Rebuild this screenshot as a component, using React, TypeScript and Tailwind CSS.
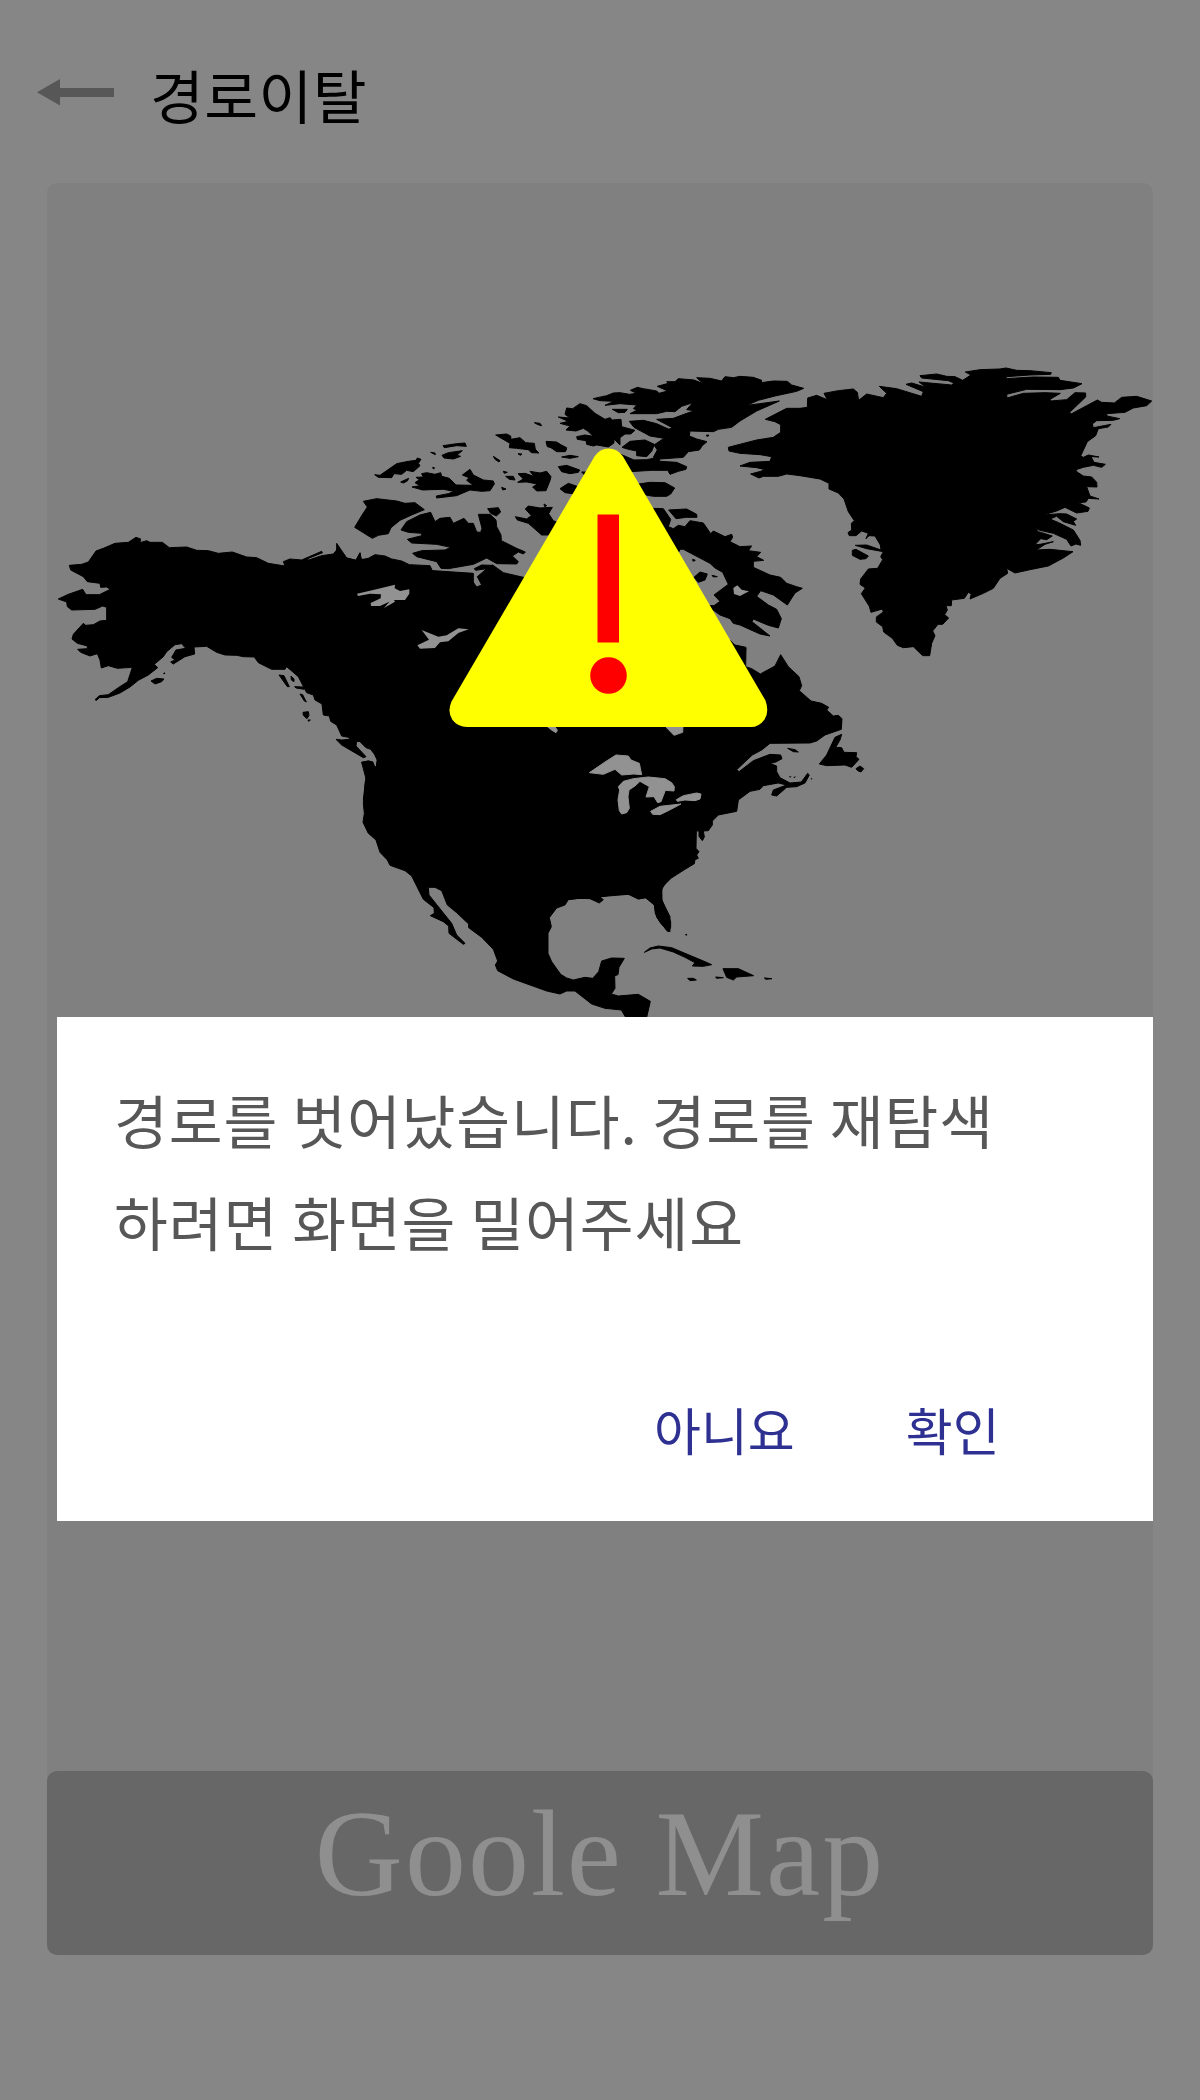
const LAND = "#000000";

function MapArt() {
  return (
    <svg viewBox="0 0 1106 834" className="block h-[834px] w-full" aria-hidden="true">
      <g transform="translate(-47 -183)" fill={LAND} stroke={LAND} strokeWidth="3" strokeLinejoin="round">
        {/* Alaska and western Canada */}
        <g transform="translate(40 500) scale(.33333)">
          <path d="M88 196L125 193L145 186L168 153L190 145L225 130L265 127L288 112L302 117L300 128L320 122L330 127L367 127L388 143L440 141L470 151L505 152L535 160L577 156L620 171L650 173L685 190L735 198L730 185L750 177L785 180L845 154L848 158L803 176L803 181L845 167L880 162L895 144L920 174L948 181L960 158L963 178L990 179L1000 200L1300 220L1300 900L970 900L979 840L965 787L985 783L998 786L1004 801L1009 800L1012 780L1005 765L992 748L978 743L960 725L950 724L948 738L978 770L970 773L905 735L888 718L905 720L930 718L925 712L905 708L890 675L872 664L868 648L850 645L846 612L825 600L820 585L800 578L775 530L740 500L735 508L712 508L695 508L655 488L643 471L610 470L590 466L555 465L530 457L500 439L462 441L464 462L435 470L400 492L392 486L405 480L395 472L408 450L437 445L425 431L405 434L380 455L370 470L343 493L353 503L325 525L295 541L270 561L240 579L205 592L178 593L170 601L165 599L178 587L205 584L235 563L263 545L277 502L232 505L205 497L184 504L180 480L172 461L150 468L122 457L113 448L142 446L142 438L112 430L96 417L100 403L130 370L137 376L160 374L180 363L200 361L200 322L188 318L165 328L95 330L82 320L80 306L55 297L85 283L128 268L138 284L178 284L211 268L200 261L182 262L180 250L142 245L130 230L92 210Z" />
          <path d="M333 543L350 535L372 537L365 545L345 552ZM372 519L375 519L374 521L371 521ZM717 525L732 527L748 560L742 560ZM753 528L762 537L762 545L754 540ZM764 560L790 561L793 568L768 564ZM780 582L788 584L799 606L793 603ZM789 637L805 635L807 646L801 656L790 646ZM804 660L811 660L806 664Z" />
        </g>
        {/* Arctic archipelago and central Canada */}
        <g transform="translate(340 380) scale(.33333)">
          <path d="M-10 490L20 534L48 541L60 520L64 539L85 535L105 524L135 528L155 537L185 543L208 554L270 557L276 570L257 573L258 587L290 591L360 587L395 600L410 621L425 615L412 590L440 566L458 555L490 578L550 592L900 592L900 1000L-10 1000Z" />
          <path d="M104 284L120 286L170 251L205 244L228 241L232 234L243 238L235 250L240 257L220 275L200 271L185 283L162 281L155 293L115 292ZM182 306L206 295L202 303L190 309ZM272 217L285 219L286 224ZM309 197L350 191L375 189L379 199L350 197L313 203ZM306 226L325 218L367 212L350 226L362 229L340 237L312 234ZM216 321L240 317L225 308L238 299L228 292L250 291L245 281L260 278L285 283L302 278L305 289L328 295L348 315L400 316L380 301L387 293L367 285L390 268L400 285L430 300L460 303L463 312L450 332L425 334L390 330L350 347L290 354L289 348L325 341L342 334L310 328L275 329L248 330Z" />
          <path d="M70 364L110 356L170 363L195 370L225 368L253 389L215 405L180 421L153 443L145 461L115 466L97 475L44 442L65 407L82 381Z" />
          <path d="M183 450L200 425L240 405L272 397L285 425L300 415L330 412L340 430L372 415L385 430L400 430L410 456L422 457L426 445L415 403L450 403L468 420L470 440L483 465L484 482L530 505L556 516L550 522L535 516L517 528L535 545L530 552L470 551L440 534L400 553L325 566L303 565L290 545L230 530L218 520L245 512L315 510L332 502L290 493L215 489L202 478L245 467L245 460L205 457ZM403 566L425 555L458 556L440 566L407 571ZM443 386L475 383L482 396L469 408L452 400ZM467 165L500 162L512 168L513 178L540 173L557 188L583 190L586 208L597 219L574 218L565 209L530 205L508 203L510 190ZM583 128L600 130L605 137L594 134ZM618 185L650 186L680 207L676 215L650 215L635 203L622 200ZM460 229L480 242L477 246L465 238ZM534 221L546 222L541 226ZM665 231L690 226L715 230L690 235ZM655 260L680 256L719 270L715 277L690 281L665 275ZM497 289L520 289L525 300L508 298ZM534 281L555 280L582 289L570 274L600 279L620 274L633 290L630 302L618 332L590 333L578 321L592 312L560 306L533 307L550 297ZM660 326L685 310L720 322L705 342L675 338ZM526 410L560 417L574 407L556 387L565 378L600 384L637 382L626 401L640 422L670 435L640 465L605 465L565 430L532 420ZM485 322L498 327L488 330ZM490 274L502 277L493 280ZM612 372L620 377L614 380ZM278 262L284 264L280 267ZM725 276L745 276L735 287Z" />
        </g>
        {/* Ellesmere, Baffin and the neighbouring islands */}
        <g transform="translate(540 350) scale(.33333)">
          <path d="M159 146L200 137L220 129L240 128L268 133L290 130L271 121L292 112L310 116L350 123L357 130L383 123L352 109L385 100L380 95L405 95L415 86L462 90L490 101L470 83L510 85L545 93L555 80L580 83L600 79L640 82L665 91L664 98L700 93L742 94L755 105L791 115L770 124L705 138L655 151L620 166L660 161L718 153L650 183L600 213L575 232L535 238L520 245L480 244L450 243L448 258L470 267L501 275L487 287L478 300L445 305L430 322L360 327L340 322L352 300L342 285L372 265L330 258L282 232L268 214L310 211L350 221L385 237L400 235L350 208L400 205L440 190L464 182L440 179L458 158L425 169L405 185L380 184L350 191L270 191L292 180L280 176L290 165L240 161L195 166L222 154L180 152Z" />
          <path d="M55 201L90 204L75 193L80 174L98 176L120 161L140 167L165 190L195 208L210 203L217 210L243 208L245 230L285 241L272 252L255 252L240 263L240 285L222 267L222 279L205 291L170 285L160 288L140 283L138 272L112 268L110 260L135 255L160 259L143 243L130 235L108 243L78 240L90 228L60 220L85 214ZM217 178L262 178L255 187L235 188ZM246 292L270 274L315 270L343 283L335 304L320 320L290 317L290 303L265 298ZM498 256L507 255L503 260ZM240 312L282 330L320 329L355 322L360 334L410 337L440 350L438 358L415 364L390 373L383 361L335 361L270 365L230 340ZM290 403L330 397L375 398L404 414L392 432L380 439L340 439L290 430ZM340 475L370 476L392 508L385 530L400 536L415 526L435 530L450 512L490 519L512 551L520 543L555 560L575 553L578 562L570 575L600 590L635 588L625 602L662 607L650 620L671 631L640 634L640 652L690 675L722 682L740 700L770 710L787 715L765 729L742 765L700 735L662 722L650 739L685 765L710 778L724 806L715 834L685 826L640 807L636 815L690 858L660 852L600 825L580 820L570 806L540 795L500 766L522 767L540 754L522 735L565 703L548 667L525 654L510 640L430 598L400 596Z" />
          <path d="M386 480L440 477L470 493L471 502L440 502L408 506ZM462 682L480 666L502 672L495 690L475 697ZM20 274L50 278L80 293L75 304L50 304L28 290ZM516 676L532 680L520 681ZM458 628L466 631L459 634ZM410 585L425 590L415 608ZM570 870L585 886L618 894L614 903L570 903Z" />
          <path fill="#929292" stroke="none" d="M580 714L592 706L605 719L627 724L600 738L582 732Z" />
        </g>
        {/* Greenland */}
        <g transform="translate(800 350) scale(.33333)">
          <path d="M-104 208L-40 175L0 175L22 172L23 144L50 136L82 149L72 130L115 122L160 117L172 127L176 151L200 132L250 143L260 130L238 109L290 116L365 139L370 125L318 103L335 99L378 112L357 96L455 105L462 99L445 92L365 84L360 77L410 72L440 79L465 80L488 91L513 75L496 66L540 59L600 57L618 54L650 61L690 62L754 68L752 73L690 75L620 80L617 86L700 81L775 82L780 91L846 101L820 114L780 119L680 118L620 133L621 144L670 130L735 128L781 130L750 148L752 153L800 149L825 128L857 129L857 141L808 188L815 191L892 150L905 157L943 159L965 142L1010 139L1055 153L1040 167L1000 174L975 187L920 191L921 198L959 206L940 211L890 212L877 222L880 233L933 223L925 231L895 236L887 257L862 275L842 318L850 322L865 315L897 321L873 320L882 337L916 343L905 352L880 346L850 352L828 359L830 365L850 378L875 381L890 397L891 411L860 410L870 438L897 447L865 445L858 456L835 458L868 474L864 484L830 489L795 472L770 483L730 495L780 491L800 492L830 507L820 514L827 526L790 515L770 499L750 507L776 518L820 540L840 571L842 586L828 582L813 588L800 568L760 550L720 541L705 535L715 545L757 558L740 569L722 566L705 584L720 583L760 575L735 583L709 600L750 598L819 605L790 624L745 648L690 659L645 669L620 655L623 670L600 685L580 715L550 730L510 747L514 732L505 727L493 745L455 750L454 767L438 767L442 780L434 794L446 804L428 823L414 823L398 843L405 857L395 880L389 917L368 917L340 890L310 893L292 886L277 865L251 846L248 830L229 816L229 801L250 786L247 777L213 787L208 769L184 731L196 714L180 703L182 687L205 657L233 655L248 629L242 620L250 605L200 596L166 586L200 585L243 600L241 585L225 558L207 557L198 566L205 550L185 543L168 557L148 557L144 548L155 540L154 520L163 512L145 485L132 447L115 429L87 417L87 400L60 387L0 377L-40 372L-65 379L-110 379L-123 384L-148 372L-118 364L-105 359L-130 353L-180 348L-150 337L-90 334L-85 320L-120 314L-180 310L-213 303L-215 292L-200 288L-130 270L-80 262L-58 247L-58 224L-75 215Z" />
          <path d="M157 601L168 598L205 618L198 626L180 628L157 616Z" />
        </g>
        {/* United States west coast and Mexico */}
        <g transform="translate(340 660) scale(.33333)">
          <path d="M65 307L85 303L98 306L104 321L109 320L112 300L105 285L105 150L990 150L990 658L966 682L965 720L990 770L990 815L981 812L950 772L943 735L915 712L895 717L870 703L830 702L780 711L790 719L778 729L750 716L715 715L685 719L675 735L650 744L628 773L634 800L624 820L624 880L635 905L662 943L680 954L700 960L735 952L758 955L776 935L785 903L815 894L853 895L837 922L834 944L824 947L825 985L814 1002L835 1008L895 1003L931 1024L920 1072L857 1072L844 1050L795 1045L755 1032L705 993L680 993L660 1002L620 993L570 975L520 957L473 932L466 915L473 903L460 868L425 832L386 803L386 792L350 758L322 735L305 692L285 682L265 682L267 705L335 790L350 825L375 850L370 853L327 820L326 798L310 785L271 767L283 760L282 743L250 718L215 648L195 632L150 616L142 600L120 577L108 540L85 520L69 487L73 460L70 430L75 370L80 345L77 325Z" />
        </g>
        {/* East coast, Newfoundland and the Caribbean */}
        <g transform="translate(560 640) scale(.33333)">
          <path d="M-50 100L510 0L515 13L558 22L557 80L575 86L601 102L645 78L662 44L685 80L717 110L725 137L718 152L753 183L785 190L806 202L800 210L820 228L835 226L846 236L844 268L795 285L770 303L750 309L630 310L605 330L577 345L530 389L537 395L580 362L630 343L662 345L666 356L648 366L630 370L650 378L650 395L660 413L690 429L724 426L743 400L748 405L735 429L710 440L680 442L650 468L635 465L640 450L680 435L655 429L610 437L600 448L570 454L535 480L530 514L475 525L457 543L457 555L445 572L430 573L433 591L427 602L417 589L417 573L409 573L408 625L417 635L410 645L415 655L405 659L403 671L375 688L320 723L304 750L306 780L332 845L332 862L325 876L300 847L286 820L283 794L260 773L235 777L205 763L0 780L-50 780Z" />
          <path d="M778 372L800 345L825 292L845 283L840 300L827 322L845 323L852 337L890 338L888 350L897 358L875 382L855 375L800 377ZM888 386L900 378L911 386L903 396L893 392ZM683 325L705 329L715 336L700 335ZM253 937L270 924L295 918L335 923L375 940L435 965L455 974L430 979L397 978L405 968L375 952L340 936L300 924L275 927ZM489 986L535 986L581 1007L530 1011L520 1020L500 1012ZM383 1015L400 1015L409 1020L390 1022ZM613 1014L636 1016L618 1018ZM467 1011L490 1013L470 1015Z" />
          <path stroke="none" d="M376 882L382 882L380 887L376 886ZM752 414L758 416L754 419ZM687 407L695 410L690 413ZM700 412L708 408L703 415Z" />
          <g fill="#929292" stroke="#929292">
            <path d="M88 398L135 366L168 345L205 348L213 360L238 370L245 404L222 402L185 405L165 388L130 403L105 400ZM175 440L190 424L220 416L265 411L315 416L335 428L343 440L342 453L316 451L303 485L293 488L282 470L258 471L268 440L240 424L225 438L207 450L204 470L208 505L200 518L185 522L178 512L174 480L179 450ZM272 514L300 499L363 492L325 512L300 524L278 523ZM349 479L370 467L410 459L423 462L420 477L405 482L375 480L352 484ZM312 255L369 255L368 277L342 286Z" />
            <path d="M-44 255L-18 255L-8 271L-12 278L-24 271Z" />
          </g>
        </g>
        {/* Northern lakes */}
        <path
          fill="#929292"
          stroke="none"
          transform="translate(340 380) scale(.33333)"
          d="M51 641L90 632L165 614L164 625L180 633L208 628L208 641L195 660L162 660L165 665L132 684L148 665L120 678L93 678L92 669L122 655L123 643L90 641L54 648ZM245 750L295 770L320 766L355 745L386 748L355 759L325 784L300 787L285 804L240 806L232 796L267 779Z"
        />
      </g>
    </svg>
  );
}

function WarningSign() {
  return (
    <svg viewBox="0 0 320 280" className="absolute left-[402px] top-[265px] h-[280px] w-[320px]" aria-label="경고">
      <path
        fill="#ffff00"
        d="M145.500 8.500Q151 0.500 159.500 0.500Q168.500 0.500 174 8.500L316.500 252.500Q320.500 264 315.500 271.500Q310 279 302 279H18Q9 279 3.500 272Q-2 264 2.500 253.500Z"
      />
      <rect x="148.500" y="66.500" width="21.500" height="128" fill="#ff0000" />
      <circle cx="159.500" cy="227.500" r="18.300" fill="#ff0000" />
    </svg>
  );
}

export default function App() {
  return (
    <div className="flex h-[2100px] w-[1200px] flex-col bg-[#868686] font-['Noto_Sans_CJK_KR',sans-serif]">
      <header className="flex h-[183px] items-start pl-[37px] pt-[52px]">
        <svg viewBox="0 0 77 27" className="mt-[27px] h-[27px] w-[77px]" fill="#575757" aria-label="뒤로">
          <path d="M0 13.300L23 0V9H77V18H23V26.500Z" />
        </svg>
        <h1 className="ml-[36px] text-[58.5px] leading-[84px] tracking-[0.4px] text-black">경로이탈</h1>
      </header>

      <main className="mx-[47px] flex h-[1772px] flex-col rounded-[10px] bg-[#808080]">
        <div className="relative">
          <MapArt />
          <WarningSign />
        </div>

        <section className="ml-[10px] flex h-[504px] flex-col bg-white pl-[57px]">
          <p className="mt-[51px] text-[58.5px] leading-[102px] tracking-[0.9px] text-[#575757]">
            경로를 벗어났습니다. 경로를 재탐색
            <br />
            하려면 화면을 밀어주세요
          </p>
          <div className="mt-[120px] flex gap-[111px] pl-[540px] text-[51px] leading-[74px] text-[#2e3192]">
            <button>아니요</button>
            <button>확인</button>
          </div>
        </section>

        <footer className="mt-auto flex h-[184px] items-start justify-center rounded-[10px] bg-[#676767]">
          <span className="mt-[22px] font-['Liberation_Serif',serif] text-[122px] leading-[122px] tracking-[2px] text-[#8f8f8f]">
            Goole Map
          </span>
        </footer>
      </main>
    </div>
  );
}
